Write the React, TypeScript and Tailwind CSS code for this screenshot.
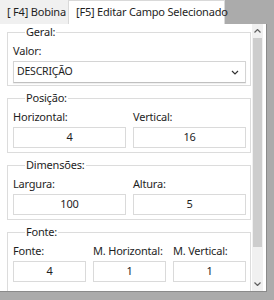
import type { ReactNode } from "react";

// Windows-forms style "edit field" panel, scrolled to the top.

const FONT = { fontFamily: '"Noto Sans", "Open Sans", sans-serif', letterSpacing: "-0.2px" };

function Group({ title, children, pb = "pb-[4px]" }: { title: string; children: ReactNode; pb?: string }) {
  return (
    <fieldset className={`border border-[#dcdcdc] pl-[5px] pr-[4px] ${pb}`}>
      <legend className="ml-[12px] px-[1px] text-[11px] leading-[16px] text-[#1e1e1e]">{title}</legend>
      {children}
    </fieldset>
  );
}

function Field({ label, value }: { label: string; value: string }) {
  return (
    <div className="flex flex-col">
      <div className="mt-[3px] text-[11px] leading-[16px] text-[#1e1e1e] whitespace-nowrap">{label}</div>
      <div className="mt-[2px] h-[21px] border border-[#dadada] bg-white flex items-center justify-center text-[11px] text-[#1e1e1e]">
        {value}
      </div>
    </div>
  );
}

export default function App() {
  return (
    <div className="w-[274px] h-[300px] bg-[#ababab] overflow-hidden" style={FONT}>
      {/* tab strip */}
      <div className="h-[24px] flex items-end">
        <div className="h-[24px] w-[68px] bg-[#f0f0f0] flex items-center pl-[7px] text-[11px] text-[#1e1e1e] whitespace-nowrap">
          [ F4] Bobina
        </div>
        <div className="h-[24px] w-[157px] bg-white border-x border-t border-[#d9d9d9] flex items-center pl-[7px] text-[11px] text-[#1e1e1e] whitespace-nowrap">
          [F5] Editar Campo Selecionado
        </div>
      </div>

      {/* page */}
      <div className="h-[268px] w-[267px] bg-white border-r border-b border-[#8a8a8a] flex">
        <div className="w-[252px] h-full overflow-hidden pl-[7px] pr-[1px] flex flex-col gap-[4px]">
          <Group title="Geral:" pb="pb-[2px]">
            <div className="mt-[3px] text-[11px] leading-[16px] text-[#1e1e1e]">Valor:</div>
            <div className="mt-[2px] h-[22px] border border-[#d4d4d4] border-b-[#c0c0c0] bg-white flex items-center justify-between pl-[3px] pr-[6px] text-[10.5px] text-[#1e1e1e] shadow-[0_1px_1px_rgba(0,0,0,0.06)]">
              <span>DESCRIÇÃO</span>
              <svg width="8" height="5" viewBox="0 0 8 5">
                <path d="M1 1 L4 4 L7 1" fill="none" stroke="#333" strokeWidth="1.2" />
              </svg>
            </div>
          </Group>
          <Group title="Posição:">
            <div className="grid grid-cols-2 gap-[7px]">
              <Field label="Horizontal:" value="4" />
              <Field label="Vertical:" value="16" />
            </div>
          </Group>
          <Group title="Dimensões:">
            <div className="grid grid-cols-2 gap-[7px]">
              <Field label="Largura:" value="100" />
              <Field label="Altura:" value="5" />
            </div>
          </Group>
          <Group title="Fonte:">
            <div className="grid grid-cols-3 gap-x-[7px]">
              <Field label="Fonte:" value="4" />
              <Field label="M. Horizontal:" value="1" />
              <Field label="M. Vertical:" value="1" />
              <div className="mt-[7px] text-[11px] leading-[16px] text-[#1e1e1e]">Alinhar:</div>
              <div className="mt-[7px] text-[11px] leading-[16px] text-[#1e1e1e]">Rotacionado:</div>
              <div />
            </div>
          </Group>
        </div>

        {/* scrollbar */}
        <div className="w-[11px] h-full bg-[#f0f0f0] flex flex-col items-center">
          <div className="h-[14px] flex items-center justify-center">
            <svg width="7" height="4" viewBox="0 0 7 4">
              <path d="M0.5 3.5 L3.5 0.5 L6.5 3.5" fill="none" stroke="#606060" strokeWidth="1.2" />
            </svg>
          </div>
          <div className="w-[9px] h-[209px] bg-[#cdcdcd]" />
          <div className="flex-1" />
          <div className="h-[14px] flex items-center justify-center">
            <svg width="7" height="4" viewBox="0 0 7 4">
              <path d="M0.5 0.5 L3.5 3.5 L6.5 0.5" fill="none" stroke="#606060" strokeWidth="1.2" />
            </svg>
          </div>
        </div>
      </div>
    </div>
  );
}
